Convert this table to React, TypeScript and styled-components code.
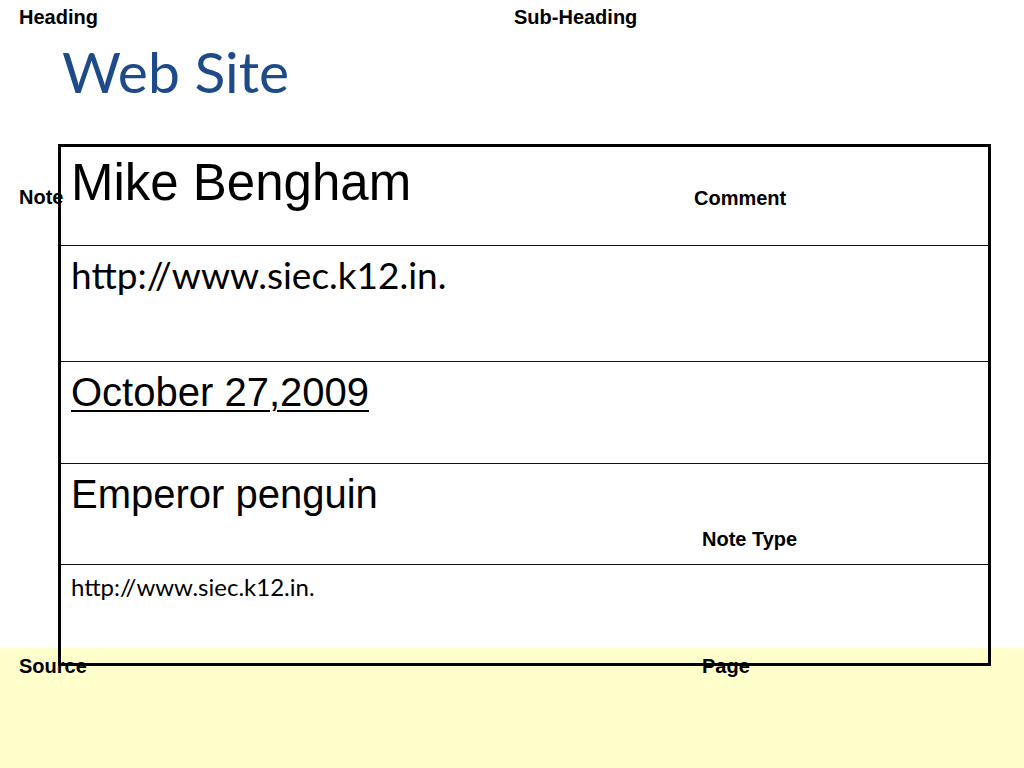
import React from "react";
import styled, { createGlobalStyle } from "styled-components";

const GlobalStyle = createGlobalStyle`
  html, body { margin: 0; padding: 0; background: #ffffff; }
  * { box-sizing: border-box; }
`;

const Slide = styled.div`
  position: relative;
  width: 1024px;
  height: 768px;
  overflow: hidden;
  background: linear-gradient(to bottom, #ffffff 0, #ffffff 648px, #ffffcc 648px, #ffffcc 100%);
  font-family: "Liberation Sans", Arial, sans-serif;
  color: #000;
`;

const LabelText = styled.span`
  font-family: "Liberation Sans", Arial, sans-serif;
  font-weight: 700;
  font-size: 20px;
  line-height: 20px;
  white-space: nowrap;
  position: relative;
  z-index: 2;
`;

const TopBar = styled.div`
  display: grid;
  grid-template-columns: 495px 1fr;
  height: 27px;
  padding: 7px 0 0 19px;
`;

const TitleArea = styled.header`
  height: 117px;
  padding: 16px 0 0 62px;
`;

const Title = styled.h1`
  margin: 0;
  font-family: Lato, "Open Sans", sans-serif;
  font-weight: 400;
  font-size: 57px;
  line-height: 56px;
  color: #1f4a8a;
`;

const Body = styled.div`
  display: grid;
  grid-template-columns: 58px 933px;
`;

const SideLabel = styled.div`
  padding: 43px 0 0 19px;
  overflow: visible;
  position: relative;
  z-index: 2;
`;

const Table = styled.div`
  display: flex;
  flex-direction: column;
  height: 522px;
  border: 3px solid #000;
`;

const Row = styled.div<{
  $h: number;
  $last?: boolean;
  $labelAt?: number;
  $labelLow?: boolean;
}>`
  height: ${(p) => p.$h}px;
  flex: none;
  display: grid;
  grid-template-columns: ${(p) => (p.$labelAt ? `${p.$labelAt}px 1fr` : "1fr")};
  align-items: start;
  align-content: ${(p) => (p.$labelLow ? "stretch" : "start")};
  padding: 10px 0 ${(p) => (p.$labelLow ? 15 : 0)}px 10px;
  border-bottom: ${(p) => (p.$last ? "none" : "1px solid #111")};
`;

const RowLabel = styled(LabelText)`
  align-self: end;
`;

const ArialText = styled.div<{ $size: number; $underline?: boolean }>`
  font-family: "Liberation Sans", Arial, sans-serif;
  font-size: ${(p) => p.$size}px;
  line-height: ${(p) => p.$size}px;
  text-decoration: ${(p) => (p.$underline ? "underline" : "none")};
  text-decoration-thickness: 2px;
  text-underline-offset: 4px;
  white-space: nowrap;
`;

const CalibriText = styled.div<{ $size: number }>`
  font-family: Lato, "Open Sans", sans-serif;
  font-size: ${(p) => p.$size}px;
  line-height: ${(p) => p.$size}px;
  white-space: nowrap;
`;

const FooterLabel = styled(LabelText)<{ $x: number }>`
  position: absolute;
  left: ${(p) => p.$x}px;
  top: 656px;
`;

export default function App() {
  return (
    <>
      <GlobalStyle />
      <Slide>
        <TopBar>
          <LabelText>Heading</LabelText>
          <LabelText>Sub-Heading</LabelText>
        </TopBar>
        <TitleArea>
          <Title>Web Site</Title>
        </TitleArea>
        <Body>
          <SideLabel>
            <LabelText>Note</LabelText>
          </SideLabel>
          <Table>
            <Row $h={99} $labelAt={623}>
              <ArialText $size={51}>Mike Bengham</ArialText>
              <RowLabel>Comment</RowLabel>
            </Row>
            <Row $h={116}>
              <CalibriText $size={37}>http://www.siec.k12.in.</CalibriText>
            </Row>
            <Row $h={102}>
              <ArialText $size={40} $underline>
                October 27,2009
              </ArialText>
            </Row>
            <Row $h={101} $labelAt={631} $labelLow>
              <ArialText $size={40}>Emperor penguin</ArialText>
              <RowLabel>Note Type</RowLabel>
            </Row>
            <Row $h={98} $last>
              <CalibriText $size={24}>http://www.siec.k12.in.</CalibriText>
            </Row>
          </Table>
        </Body>
        <FooterLabel $x={19}>Source</FooterLabel>
        <FooterLabel $x={702}>Page</FooterLabel>
      </Slide>
    </>
  );
}
